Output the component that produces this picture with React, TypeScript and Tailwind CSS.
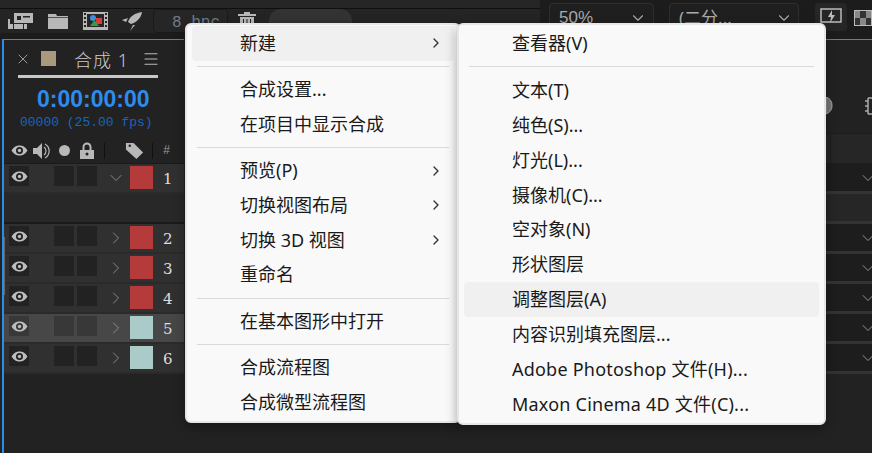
import { ChevronDown, ChevronRight, Menu as MenuIcon, X } from "lucide-react"

const rows = [
  { n: 1, color: "bg-[#b53a3a]", open: true },
  { n: 2, color: "bg-[#b53a3a]" },
  { n: 3, color: "bg-[#b53a3a]" },
  { n: 4, color: "bg-[#b53a3a]" },
  { n: 5, color: "bg-[#abcbc9]", active: true },
  { n: 6, color: "bg-[#abcbc9]" },
]

type Item = { label: string; arrow?: boolean; hover?: boolean; wide?: boolean } | "sep"

const mainItems: Item[] = [
  { label: "新建", arrow: true, hover: true },
  "sep",
  { label: "合成设置..." },
  { label: "在项目中显示合成" },
  "sep",
  { label: "预览(P)", arrow: true },
  { label: "切换视图布局", arrow: true },
  { label: "切换 3D 视图", arrow: true },
  { label: "重命名" },
  "sep",
  { label: "在基本图形中打开" },
  "sep",
  { label: "合成流程图" },
  { label: "合成微型流程图" },
]

const subItems: Item[] = [
  { label: "查看器(V)" },
  "sep",
  { label: "文本(T)" },
  { label: "纯色(S)..." },
  { label: "灯光(L)..." },
  { label: "摄像机(C)..." },
  { label: "空对象(N)" },
  { label: "形状图层" },
  { label: "调整图层(A)", hover: true },
  { label: "内容识别填充图层..." },
  { label: "Adobe Photoshop 文件(H)...", wide: true },
  { label: "Maxon Cinema 4D 文件(C)...", wide: true },
]

function ContextMenu({ items, className, itemH, sepH }: { items: Item[]; className: string; itemH: string; sepH: string }) {
  return (
    <div className={"absolute top-[23px] rounded-md border-2 border-[#e6e6e6] bg-[#f9f9f9] px-[5px] py-[1px] shadow-[0_4px_12px_rgba(0,0,0,0.35)] " + className}>
      {items.map((item, i) =>
        item === "sep" ? (
          <div key={i} className={"flex items-center px-[5px] " + sepH}>
            <div className="h-px w-full bg-[#d9d9d9]" />
          </div>
        ) : (
          <div
            key={i}
            className={"flex items-center justify-between rounded pl-[48px] pr-[10px] text-[18px] text-[#1a1a1a] " + itemH + " " + (item.hover ? "bg-[#f0f0f0]" : "")}
          >
            <span className={item.wide ? "tracking-[0.22px]" : ""}>{item.label}</span>
            {item.arrow && <ChevronRight size={16} strokeWidth={2} className="text-[#333]" />}
          </div>
        )
      )}
    </div>
  )
}

function EyeIcon({ dark = "#222" }: { dark?: string }) {
  return (
    <svg width="17" height="11" viewBox="0 0 17 11">
      <path d="M0.500 5.500C3 1.500 5.500 0.500 8.500 0.500S14 1.500 16.500 5.500C14 9.500 11.500 10.500 8.500 10.500S3 9.500 0.500 5.500z" fill="#bdbdbd" />
      <circle cx="8.500" cy="5.500" r="3.500" fill={dark} />
      <circle cx="8.500" cy="5.500" r="1.700" fill="#bdbdbd" />
    </svg>
  )
}

function ToolIcons() {
  return (
    <div className="flex h-[24px] items-center">
      {/* footage */}
      <svg width="26" height="17" viewBox="0 0 26 17" className="ml-[7px] text-[#b8b8b8]">
        <path d="M1 6h2v10H1zM7 0h19v10H7z" fill="currentColor" />
        <path d="M10 3h4v4h-4zM16 3h7v1.500h-7z" fill="#242424" />
        <path d="M3 11h17v5H3z" fill="currentColor" />
        <path d="M6 11h1v5H6zM16 11h1v5h-1z" fill="#242424" />
      </svg>
      {/* folder */}
      <svg width="20" height="15" viewBox="0 0 20 15" className="ml-[15px] text-[#b8b8b8]">
        <path d="M0 0h8l1 2h11v13H0z" fill="currentColor" />
        <path d="M0 3h20v.7H0z" fill="#242424" />
      </svg>
      {/* composition */}
      <svg width="25" height="18" viewBox="0 0 25 18" className="ml-[15px]">
        <rect x="0" y="0" width="25" height="18" fill="#b8b8b8" />
        <path d="M1 1h2v2H1zM22 1h2v2h-2zM1 5h2v2H1zM22 5h2v2h-2zM1 9h2v2H1zM22 9h2v2h-2zM1 13h2v2H1zM22 13h2v2h-2z" fill="#242424" />
        <rect x="4" y="2" width="17" height="13" fill="#262626" />
        <circle cx="10" cy="6" r="3" fill="#3a8fe0" />
        <rect x="13" y="6" width="6" height="6" fill="#d93a3a" />
        <path d="M7 14l4.500-6 4.500 6z" fill="#2f9e44" />
      </svg>
      {/* rocket */}
      <svg width="20" height="19" viewBox="0 0 20 19" className="ml-[14px] text-[#b8b8b8]">
        <path d="M20 0C13 1 8 4 6 10l3 2c6-2 10-6 11-12zM0 8l6-2-2 4zM8 19l3-6 2 0z" fill="currentColor" />
      </svg>
      <div className="ml-[11px] flex h-[24px] w-[75px] items-center rounded-sm border border-[#1a1a1a] bg-[#262626] pl-[18px] pt-[4px] font-['Liberation_Mono',monospace] text-[16px] whitespace-nowrap text-[#6f7d8a]">
        8 bpc
      </div>
      {/* trash */}
      <svg width="18" height="19" viewBox="0 0 18 19" className="ml-[10px] text-[#b8b8b8]">
        <path d="M6 0h6v2h6v2H0V2h6zM2 5h14v14H2z" fill="currentColor" />
        <path d="M5 7h1v10H5zM8.500 7h1v10h-1zM12 7h1v10h-1z" fill="#242424" />
      </svg>
      <div className="ml-[13px] h-[24px] w-[83px] rounded-t-[12px] bg-[#333]" />
    </div>
  )
}

function HeaderIcons() {
  return (
    <div className="flex h-[26px] items-center border-b border-[#1a1a1a] pl-[7px] text-[#b8b8b8]">
      <EyeIcon />
      <svg width="19" height="18" viewBox="0 0 19 18" className="ml-[5px]">
        <path d="M0 6h4l5-5v16l-5-5H0z" fill="currentColor" />
        <path d="M11 5a5 5 0 0 1 0 8M12 2a8 8 0 0 1 0 14" fill="none" stroke="currentColor" strokeWidth="1.200" />
      </svg>
      <div className="ml-[7px] h-[11px] w-[11px] rounded-full bg-[#b8b8b8]" />
      <svg width="14" height="17" viewBox="0 0 14 17" className="ml-[10px]">
        <path d="M2.500 8V5a4.500 4.500 0 0 1 9 0v3h-2V5a2.500 2.500 0 0 0-5 0v3z" fill="currentColor" />
        <path d="M0 8h14v9H0z" fill="currentColor" />
        <circle cx="7" cy="12" r="1.500" fill="#222" />
      </svg>
      <div className="ml-[10px] h-[16px] w-px bg-[#111]" />
      <svg width="19" height="19" viewBox="0 0 20 20" className="ml-[20px]">
        <path d="M1 2h8l10 10-7 7L1 9z" fill="currentColor" />
        <circle cx="5" cy="5" r="1.300" fill="#222" />
      </svg>
      <div className="ml-[8px] h-[16px] w-px bg-[#111]" />
      <span className="ml-[10px] font-['Liberation_Mono',monospace] text-[12px] text-[#999]">#</span>
    </div>
  )
}

function LayerRow({ row }: { row: (typeof rows)[number] }) {
  const bg = row.active ? "bg-[#474747]" : "bg-[#303030]"
  const cell = row.active ? "bg-[#383838]" : "bg-[#222]"
  return (
    <div className={"flex h-[30px] items-start border-b-2 border-[#2a2a2a] pl-[5px] pt-[2px] " + bg}>
      <div className={"flex h-[20px] w-[20px] items-center justify-center " + cell}>
        <EyeIcon dark={row.active ? "#383838" : "#222"} />
      </div>
      <div className={"ml-[25px] h-[20px] w-[20px] " + cell} />
      <div className={"ml-[3px] h-[20px] w-[20px] " + cell} />
      <div className="ml-[9px] flex h-[23px] w-[20px] items-center justify-center text-[#999]">
        {row.open ? <ChevronDown size={20} strokeWidth={1} /> : <ChevronRight size={20} strokeWidth={1} />}
      </div>
      <div className={"ml-[4px] h-[23px] w-[23px] " + row.color} />
      <span className="ml-[10px] flex h-[26px] items-center font-['DejaVu_Serif',serif] text-[15px] leading-none text-[#ddd]">{row.n}</span>
    </div>
  )
}

function RightRow({ dark }: { dark?: boolean }) {
  return (
    <div className={"flex h-[30px] items-center justify-end border-b-[3px] border-[#333] " + (dark ? "bg-[#1d1d1d]" : "bg-[#262626]")}>
      {dark && <ChevronDown size={20} strokeWidth={1} className="mr-[-6px] text-[#aaa]" />}
    </div>
  )
}

export default function App() {
  return (
    <div className="relative h-[453px] w-[872px] overflow-hidden bg-[#222] font-['Noto_Sans','Noto_Sans_CJK_SC',sans-serif]">
      {/* top bar */}
      <div className="flex h-[33px] bg-[#1c1c1c]">
        <div className="w-[548px]">
          <div className="h-[8px] bg-[#262626]" />
          <div className="h-[25px] border-t border-[#0f0f0f] bg-[#242424]">
            <ToolIcons />
          </div>
        </div>
        <div className="flex flex-1 items-start pl-[9px] pt-[3px] text-[#aaa]">
          <div className="flex h-[30px] w-[105px] items-center justify-between rounded-sm border border-[#2e2e2e] bg-[#1f1f1f] pl-[9px] pr-[6px] font-['Liberation_Sans',sans-serif] text-[17px]">
            50%
            <ChevronDown size={18} strokeWidth={1.5} />
          </div>
          <div className="ml-[15px] flex h-[30px] w-[130px] items-center justify-between rounded-sm border border-[#2e2e2e] bg-[#1f1f1f] pl-[9px] pr-[5px] text-[17px] whitespace-nowrap">
            (二分...
            <ChevronDown size={18} strokeWidth={1.5} />
          </div>
          <div className="ml-[16px] flex h-[28px] w-[32px] items-center justify-center rounded bg-[#262626]">
            <svg width="22" height="18" viewBox="0 0 22 18">
              <path d="M1 1h20v13H1z" fill="none" stroke="#bbb" strokeWidth="1.500" />
              <path d="M12 2L8 9h3l-1 6 5-8h-3z" fill="#bbb" />
            </svg>
          </div>
          <div className="ml-[7px] mt-[7px] grid h-[16px] w-[18px] shrink-0 grid-cols-3 border border-[#bbb]">
            <div className="bg-[#888]" />
            <div className="bg-[#333]" />
            <div className="bg-[#888]" />
            <div className="bg-[#333]" />
            <div className="bg-[#888]" />
            <div className="bg-[#333]" />
          </div>
        </div>
      </div>
      <div className="h-[6px] bg-[#1c1c1c]" />

      {/* panels */}
      <div className="flex h-[414px] items-start justify-between">
        <div className="relative ml-[2px] h-[414px] w-[182px] border-l-2 border-t border-[#2d8ceb]">
          <div className="flex h-[35px] items-center pl-[11px] pt-[2px] text-[#999]">
            <X size={16} strokeWidth={1.5} />
            <div className="ml-[10px] h-[15px] w-[15px] bg-[#a99a7d]" />
            <span className="ml-[18px] mt-[3px] text-[18px] font-light tracking-[1px] text-[#ccc]">合成 1</span>
            <MenuIcon size={18} strokeWidth={1.5} className="ml-[13px] text-[#bbb]" />
          </div>
          <div className="ml-[14px] h-[3px] w-[140px] bg-[#c8c8c8]" />
          <div className="mt-[7px] pl-[33px] font-['Liberation_Sans',sans-serif] text-[23px] font-bold leading-[28px] text-[#2d8ceb]">
            0:00:00:00
          </div>
          <div className="mt-px pl-[16px] font-['Liberation_Mono',monospace] text-[13px] leading-[18px] whitespace-nowrap text-[#1565c0]">
            00000 (25.00 fps)
          </div>
          <div className="mt-[6px]">
            <HeaderIcons />
            <LayerRow row={rows[0]} />
            <div className="h-[30px] border-b-2 border-[#1a1a1a] bg-[#282828]" />
            {rows.slice(1).map((r) => (
              <LayerRow key={r.n} row={r} />
            ))}
          </div>
          {/* scrollbar thumb */}
          <div className="absolute left-0 top-[197px] h-[58px] w-px bg-[#666]" />
        </div>

        <div className="w-[46px] border-t border-[#2d8ceb]">
          <div className="flex h-[93px] items-center justify-between pt-[38px]">
            <svg width="10" height="18" viewBox="0 0 10 18">
              <path d="M0 0a9 9 0 0 1 0 17z" fill="#777" stroke="#aaa" strokeWidth="1" />
            </svg>
            <svg width="7" height="18" viewBox="0 0 7 18">
              <path d="M3 1h4M3 17h4M3 1v16" fill="none" stroke="#aaa" strokeWidth="1.500" />
              <path d="M0 4h3M0 9h3M0 14h3" stroke="#aaa" strokeWidth="1.500" />
            </svg>
          </div>
          <div className="flex h-[31px] border-y border-[#1d1d1d] bg-[#262626] pl-[4px]">
            <div className="w-px bg-[#1d1d1d]" />
          </div>
          <RightRow dark />
          <RightRow />
          <RightRow dark />
          <RightRow dark />
          <RightRow dark />
          <RightRow dark />
          <RightRow dark />
        </div>
      </div>

      <ContextMenu items={mainItems} itemH="h-[34.75px]" sepH="h-[11.5px]" className="left-[185px] w-[276px]" />
      <ContextMenu items={subItems} itemH="h-[34.9px]" sepH="h-[12px]" className="left-[457px] w-[369px]" />
    </div>
  )
}
